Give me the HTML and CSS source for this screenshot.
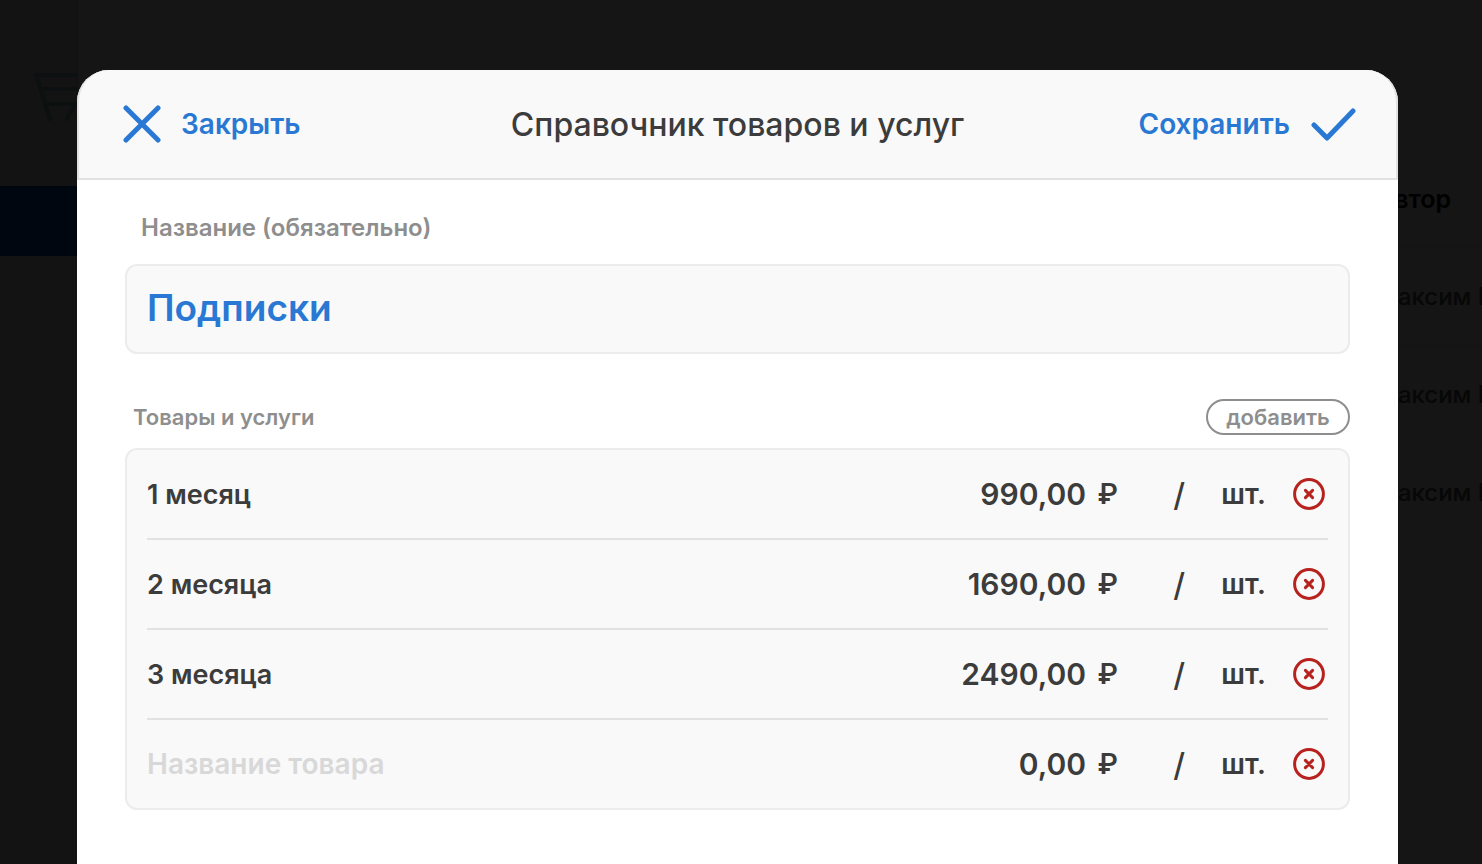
FILE: index.html
```html
<!DOCTYPE html>
<html lang="ru">
<head>
  <meta charset="UTF-8">
  <meta name="viewport" content="width=device-width, initial-scale=1">
  <title>Справочник товаров и услуг</title>
  <link rel="stylesheet" href="styles.css">
</head>
<body>

  <div class="page">
    <aside class="sidebar">
      <div class="sidebar-top">
        <svg class="cart" viewBox="0 0 56 50" aria-hidden="true">
          <path d="M2 3h54M2 3l14 44M7 17h49M12 32h44M33 47l9-16"/>
        </svg>
      </div>
      <div class="sidebar-active"></div>
    </aside>
    <div class="authors">
      <div class="author author-head">Автор</div>
      <div class="author">Максим П</div>
      <div class="author">Максим П</div>
      <div class="author">Максим П</div>
    </div>
  </div>

  <form class="modal" role="dialog" aria-labelledby="modalTitle">
    <header class="modal-header">
      <button type="button" class="link-btn link-btn-left">
        <svg width="38" height="38" viewBox="0 0 38 38" aria-hidden="true"><path d="M3 3l32 32M35 3L3 35"/></svg>
        Закрыть
      </button>
      <h1 id="modalTitle">Справочник товаров и услуг</h1>
      <button type="submit" class="link-btn link-btn-right">
        Сохранить
        <svg width="46" height="34" viewBox="0 0 46 34" aria-hidden="true"><path d="M4 18l13 13L43 4"/></svg>
      </button>
    </header>

    <div class="modal-body">
      <label class="label" for="catalogName">Название (обязательно)</label>
      <input class="name-input" id="catalogName" type="text" value="Подписки">

      <div class="list-head">
        <h2>Товары и услуги</h2>
        <button type="button" class="add-btn">добавить</button>
      </div>

      <ul class="items">
        <li class="item">
          <input class="item-name" type="text" value="1 месяц" placeholder="Название товара" aria-label="Название товара">
          <input class="item-price" type="text" value="990,00" aria-label="Цена">
          <span>₽</span>
          <span class="item-slash">/</span>
          <input class="item-unit" type="text" value="шт." aria-label="Единица">
          <button type="button" class="remove-btn" aria-label="Удалить">
            <svg width="32" height="32" viewBox="0 0 32 32" aria-hidden="true"><circle cx="16" cy="16" r="14.4"/><path d="M12.4 12.4l7.2 7.2M19.6 12.4l-7.2 7.2"/></svg>
          </button>
        </li>
        <li class="item">
          <input class="item-name" type="text" value="2 месяца" placeholder="Название товара" aria-label="Название товара">
          <input class="item-price" type="text" value="1690,00" aria-label="Цена">
          <span>₽</span>
          <span class="item-slash">/</span>
          <input class="item-unit" type="text" value="шт." aria-label="Единица">
          <button type="button" class="remove-btn" aria-label="Удалить">
            <svg width="32" height="32" viewBox="0 0 32 32" aria-hidden="true"><circle cx="16" cy="16" r="14.4"/><path d="M12.4 12.4l7.2 7.2M19.6 12.4l-7.2 7.2"/></svg>
          </button>
        </li>
        <li class="item">
          <input class="item-name" type="text" value="3 месяца" placeholder="Название товара" aria-label="Название товара">
          <input class="item-price" type="text" value="2490,00" aria-label="Цена">
          <span>₽</span>
          <span class="item-slash">/</span>
          <input class="item-unit" type="text" value="шт." aria-label="Единица">
          <button type="button" class="remove-btn" aria-label="Удалить">
            <svg width="32" height="32" viewBox="0 0 32 32" aria-hidden="true"><circle cx="16" cy="16" r="14.4"/><path d="M12.4 12.4l7.2 7.2M19.6 12.4l-7.2 7.2"/></svg>
          </button>
        </li>
        <li class="item">
          <input class="item-name" type="text" placeholder="Название товара" aria-label="Название товара">
          <input class="item-price" type="text" value="0,00" aria-label="Цена">
          <span>₽</span>
          <span class="item-slash">/</span>
          <input class="item-unit" type="text" value="шт." aria-label="Единица">
          <button type="button" class="remove-btn" aria-label="Удалить">
            <svg width="32" height="32" viewBox="0 0 32 32" aria-hidden="true"><circle cx="16" cy="16" r="14.4"/><path d="M12.4 12.4l7.2 7.2M19.6 12.4l-7.2 7.2"/></svg>
          </button>
        </li>
      </ul>
    </div>
  </form>

</body>
</html>
```
FILE: styles.css
```css
* {
  box-sizing: border-box;
}
body {
  margin: 0;
  background: #151515;
  color: #3c3c3c;
  font-family: Inter, "Noto Sans", sans-serif;
  font-size: 28px;
  font-weight: 500;
}
button, input {
  font: inherit;
  color: inherit;
  border: none;
  background: none;
  padding: 0;
  margin: 0;
  min-width: 0;
}
button {
  cursor: pointer;
}
svg {
  display: block;
  fill: none;
  stroke-linecap: round;
  stroke-linejoin: round;
  flex-shrink: 0;
}

/* page under the dialog */
.page {
  display: flex;
  justify-content: space-between;
  min-height: 100vh;
  overflow: hidden;
}
.sidebar {
  width: 78px;
  background: #131313;
  border-right: 1px solid #101010;
}
.sidebar-top {
  height: 186px;
  padding: 72px 0 0 34px;
  overflow: hidden;
}
.cart {
  width: 56px;
  height: 50px;
  stroke: #0d1010;
  stroke-width: 4;
}
.sidebar-active {
  height: 70px;
  background: #00060f;
}
.authors {
  width: 106px;
  padding-top: 150px;
  color: #070707;
  font-size: 24px;
}
.author {
  height: 98px;
  line-height: 98px;
  border-bottom: 2px solid #141414;
  white-space: nowrap;
}
.author-head {
  color: #000;
  font-size: 25px;
  font-weight: 600;
}

/* dialog */
.modal {
  position: absolute;
  top: 70px;
  left: 77px;
  right: 84px;
  min-height: calc(100vh - 70px);
  background: #fff;
  border-radius: 32px 32px 0 0;
}
.modal-header {
  display: grid;
  grid-template-columns: 1fr auto 1fr;
  align-items: center;
  height: 110px;
  padding: 0 40px;
  background: #f9f9f9;
  border: 2px solid #e2e2e2;
  border-top: none;
  border-radius: 32px 32px 0 0;
}
.modal-header h1 {
  margin: 0;
  font-size: 32px;
  font-weight: 500;
}
.link-btn {
  display: flex;
  align-items: center;
  gap: 20px;
  color: #2878d4;
  font-weight: 600;
}
.link-btn svg {
  stroke: #2878d4;
  stroke-width: 5;
}
.link-btn-left {
  padding-left: 4px;
}
.link-btn-right {
  justify-self: end;
}
.modal-body {
  padding: 32px 48px 48px;
}
.label {
  display: block;
  padding-left: 16px;
  color: #8e8e8e;
  font-size: 24px;
  font-weight: 600;
  line-height: 32px;
}
.name-input {
  width: 100%;
  height: 90px;
  margin-top: 20px;
  padding: 0 20px 4px;
  background: #f9f9f9;
  border: 2px solid #ececec;
  border-radius: 12px;
  color: #2878d4;
  font-size: 37px;
  font-weight: 600;
}
.list-head {
  display: flex;
  justify-content: space-between;
  align-items: center;
  margin: 45px 0 13px;
  padding-left: 8px;
  color: #8e8e8e;
  font-size: 22px;
}
.list-head h2 {
  margin: 0;
  font-size: 22px;
  font-weight: 600;
}
.add-btn {
  width: 144px;
  height: 36px;
  border: 2px solid #8e8e8e;
  border-radius: 18px;
  font-weight: 600;
}
.items {
  margin: 0;
  padding: 0 20px;
  list-style: none;
  background: #f9f9f9;
  border: 2px solid #ececec;
  border-radius: 12px;
}
.item {
  display: grid;
  grid-template-columns: 1fr 200px 32px 67px 81px 62px;
  align-items: center;
  height: 90px;
  border-bottom: 2px solid #e2e2e2;
  font-weight: 600;
  text-align: right;
}
.item:last-child {
  height: 88px;
  border-bottom: none;
}
.item-name {
  font-size: 27px;
}
.item-name::placeholder {
  color: #d8d8d8;
  font-size: 28px;
  opacity: 1;
}
.item-price, .item-unit {
  text-align: right;
}
.item-price {
  font-size: 30px;
}
.item-slash {
  font-size: 32px;
  font-weight: 500;
}
.remove-btn {
  justify-self: end;
  padding: 0 3px;
}
.remove-btn svg {
  stroke: #b7221e;
  stroke-width: 3;
}
```
